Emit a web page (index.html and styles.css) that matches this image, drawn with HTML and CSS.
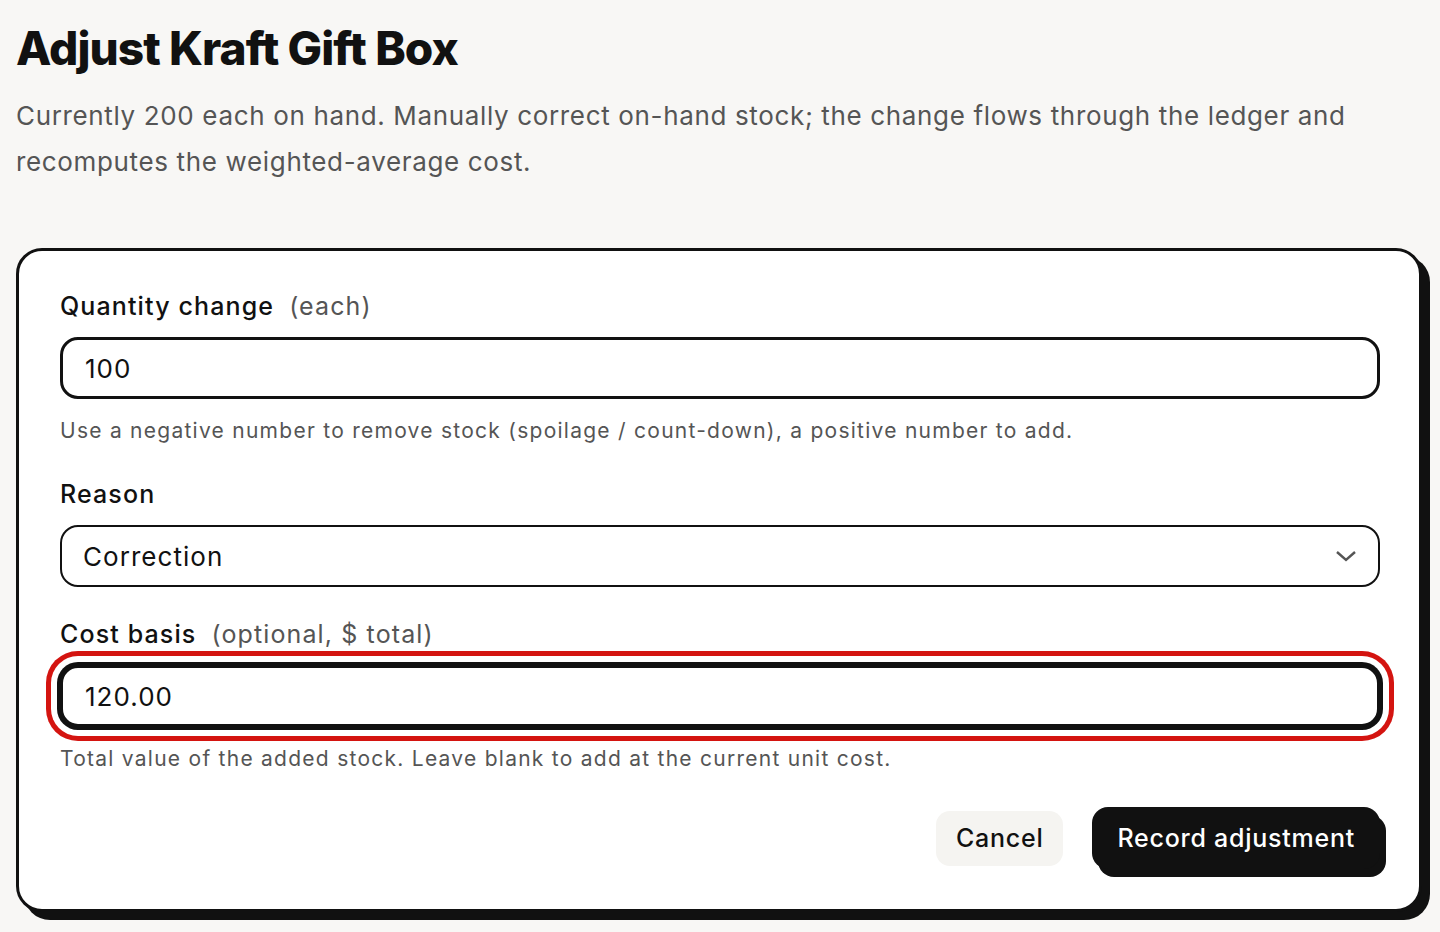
FILE: index.html
```html
<!DOCTYPE html>
<html lang="en">

<head>
    <meta charset="UTF-8">
    <meta name="viewport" content="width=device-width, initial-scale=1.0">
    <title>Adjust Kraft Gift Box</title>
    <link rel="stylesheet" href="styles.css">
</head>

<body>
    <main class="page">
        <header class="page-head">
            <h1>Adjust Kraft Gift Box</h1>
            <p class="lead">Currently 200 each on hand. Manually correct on-hand stock; the change flows through the ledger and recomputes the weighted-average cost.</p>
        </header>

        <form class="card">
            <div class="field">
                <label class="label" for="qty">Quantity change<span class="unit">(each)</span></label>
                <input class="input" id="qty" type="text" value="100">
                <p class="help">Use a negative number to remove stock (spoilage / count-down), a positive number to add.</p>
            </div>

            <div class="field">
                <label class="label" for="reason">Reason</label>
                <div class="select-wrap">
                    <select class="input select" id="reason">
                        <option>Correction</option>
                        <option>Spoilage</option>
                        <option>Count</option>
                    </select>
                    <svg class="chevron" width="22" height="14" viewBox="0 0 22 14">
                        <polyline points="2,3 11,11 20,3" fill="none" stroke="#555" stroke-width="2.4" />
                    </svg>
                </div>
            </div>

            <div class="field">
                <label class="label" for="cost">Cost basis<span class="unit">(optional, $ total)</span></label>
                <input class="input is-focused" id="cost" type="text" value="120.00">
                <p class="help">Total value of the added stock. Leave blank to add at the current unit cost.</p>
            </div>

            <div class="actions">
                <button type="button" class="btn btn-ghost">Cancel</button>
                <button type="submit" class="btn btn-primary">Record adjustment</button>
            </div>
        </form>
    </main>
</body>

</html>
```

FILE: styles.css
```css
body {
    margin: 0;
    background-color: #f8f7f5;
    color: #111;
    font-family: Inter, "Noto Sans", sans-serif;
}

.page {
    padding: 21px 18px 16px 16px;
}

.page-head h1 {
    margin: 0;
    font-size: 46px;
    line-height: 55px;
    font-weight: 800;
    letter-spacing: -0.02em;
}

.page-head .lead {
    margin: 17px 0 0;
    font-size: 26px;
    line-height: 46px;
    color: #555;
    letter-spacing: .025em;
}

.card {
    margin-top: 63px;
    padding: 40px 39px 40px 41px;
    border: 3px solid #111;
    border-radius: 26px;
    background-color: #fff;
    box-shadow: 8px 8px 0 #111;
}

.field+.field {
    margin-top: 32px;
}

.label {
    display: block;
    margin-bottom: 15px;
    font-size: 25px;
    line-height: 31px;
    font-weight: 500;
    letter-spacing: .045em;
}

.label .unit {
    margin-left: 15px;
    font-weight: 400;
    color: #555;
}

.input {
    display: block;
    box-sizing: border-box;
    width: 100%;
    height: 62px;
    padding: 0 22px;
    border: 3px solid #111;
    border-radius: 18px;
    background-color: #fff;
    color: #111;
    font-family: inherit;
    font-size: 26px;
    letter-spacing: .04em;
    outline: none;
}

.input.is-focused {
    box-shadow: 0 0 0 3px #111, 0 0 0 9px #fff, 0 0 0 14px #d41410;
}

.select-wrap {
    position: relative;
}

.select {
    border-width: 2px;
    padding-left: 21px;
    appearance: none;
    -webkit-appearance: none;
}

.select-wrap .chevron {
    position: absolute;
    top: 50%;
    right: 23px;
    transform: translate(0, -50%);
    pointer-events: none;
}

.help {
    margin: 16px 0 0;
    font-size: 21px;
    line-height: 32px;
    color: #555;
    letter-spacing: .06em;
}

.actions {
    display: flex;
    align-items: center;
    justify-content: flex-end;
    gap: 29px;
    margin-top: 32px;
}

.btn {
    border: none;
    font-family: inherit;
    font-size: 25px;
    font-weight: 500;
    letter-spacing: .03em;
    cursor: pointer;
}

.btn-ghost {
    height: 55px;
    padding: 0 20px;
    border-radius: 14px;
    background-color: #f5f4f1;
    color: #111;
}

.btn-primary {
    height: 62px;
    padding: 0 25px;
    border-radius: 16px;
    background-color: #111;
    color: #fff;
    box-shadow: 6px 8px 0 #111;
}
```
